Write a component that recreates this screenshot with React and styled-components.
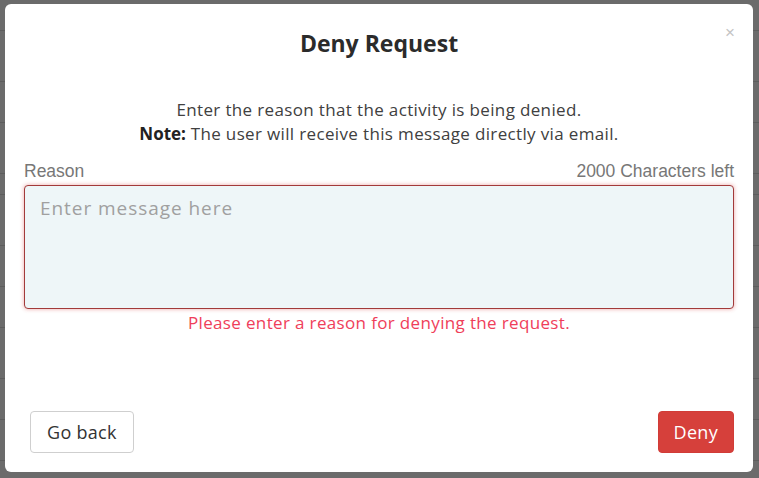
import React from 'react';
import styled, { createGlobalStyle } from 'styled-components';

const Global = createGlobalStyle`
  html, body { margin: 0; padding: 0; }
  body {
    width: 759px;
    height: 478px;
    overflow: hidden;
    font-family: 'Open Sans', 'Noto Sans', sans-serif;
  }
`;

const Page = styled.div`
  position: relative;
  width: 759px;
  height: 478px;
  background: #fff;
  overflow: hidden;
`;

const PageRow = styled.div`
  height: ${p => p.h}px;
  border-bottom: 1px solid #ddd;
`;

const Backdrop = styled.div`
  position: absolute;
  inset: 0;
  background: rgba(0, 0, 0, 0.58);
  display: flex;
  align-items: flex-start;
  justify-content: flex-start;
  padding: 4px 0 0 5px;
`;

const Modal = styled.div`
  position: relative;
  box-sizing: border-box;
  width: 748px;
  height: 468px;
  background: #fff;
  border-radius: 6px;
  padding: 0 19px 19px;
  display: flex;
  flex-direction: column;
`;

const Title = styled.h2`
  margin: 25px 0 0;
  text-align: center;
  font-size: 23px;
  font-weight: 700;
  color: #2b2b2b;
  line-height: 28px;
`;

const Close = styled.button`
  position: absolute;
  top: 20px;
  right: 18px;
  border: 0;
  background: none;
  color: #c4c4c4;
  font-size: 17px;
  line-height: 1;
  padding: 0;
  cursor: pointer;
`;

const Intro = styled.p`
  margin: 41px 0 0;
  text-align: center;
  font-size: 17px;
  line-height: 24px;
  letter-spacing: 0.35px;
  color: #404040;
  b { font-weight: 700; color: #222; letter-spacing: 0; }
`;

const LabelRow = styled.div`
  margin-top: 15px;
  display: flex;
  justify-content: space-between;
  font-family: 'Liberation Sans', Arial, sans-serif;
  font-size: 17.5px;
  line-height: 21px;
  color: #777;
`;

const Field = styled.textarea`
  box-sizing: border-box;
  margin-top: 3px;
  width: 100%;
  height: 124px;
  resize: none;
  border: 1px solid #a23a3a;
  border-radius: 4px;
  background: #eef6f8;
  box-shadow: 0 0 4px rgba(210, 60, 60, 0.45);
  padding: 9px 15px;
  font-family: 'Open Sans', 'Noto Sans', sans-serif;
  font-size: 19px;
  line-height: 26px;
  letter-spacing: 0.95px;
  color: #333;
  outline: none;
  &::placeholder { color: #a0a0a0; }
`;

const Error = styled.div`
  margin-top: 3px;
  text-align: center;
  font-size: 17px;
  line-height: 22px;
  letter-spacing: 0.35px;
  color: #ef3e5a;
`;

const Footer = styled.div`
  margin-top: auto;
  display: flex;
  justify-content: space-between;
  padding-left: 6px;
`;

const Button = styled.button`
  box-sizing: border-box;
  height: 42px;
  padding: 0 ${p => (p.danger ? 15 : 16)}px;
  border-radius: 4px;
  font-family: 'Open Sans', 'Noto Sans', sans-serif;
  font-size: 18px;
  letter-spacing: 0.3px;
  border: 1px solid ${p => (p.danger ? '#d13c37' : '#cfcfcf')};
  background: ${p => (p.danger ? '#d6403b' : '#fff')};
  color: ${p => (p.danger ? '#fff' : '#333')};
  cursor: pointer;
`;

export default function App() {
  return (
    <Page>
      <Global />
      {[30, 50, 40, 50, 20, 50, 40, 40, 50, 40, 40].map((h, i) => (
        <PageRow key={i} h={h} />
      ))}
      <Backdrop>
        <Modal>
          <Close aria-label="Close">×</Close>
          <Title>Deny Request</Title>
          <Intro>
            Enter the reason that the activity is being denied.
            <br />
            <b>Note:</b> The user will receive this message directly via email.
          </Intro>
          <LabelRow>
            <span>Reason</span>
            <span>2000 Characters left</span>
          </LabelRow>
          <Field placeholder="Enter message here" />
          <Error>Please enter a reason for denying the request.</Error>
          <Footer>
            <Button>Go back</Button>
            <Button danger>Deny</Button>
          </Footer>
        </Modal>
      </Backdrop>
    </Page>
  );
}
